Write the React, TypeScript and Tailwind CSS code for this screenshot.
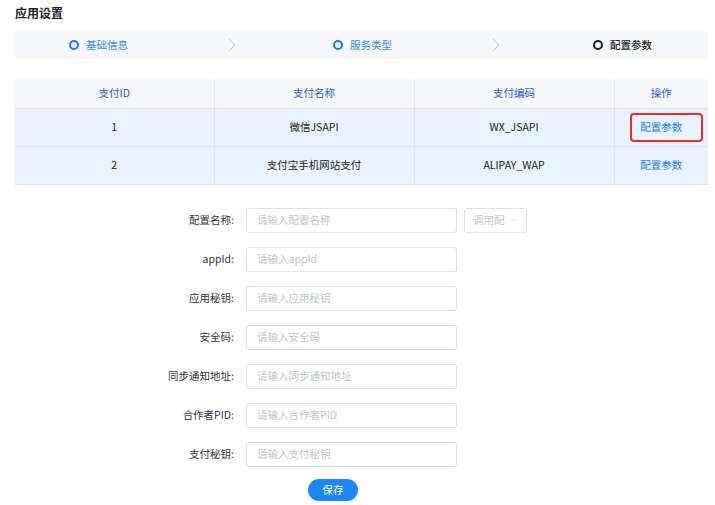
import { ChevronDown } from 'lucide-react'

const font = { fontFamily: '"Noto Sans CJK SC", "Noto Sans", sans-serif' }

const rows = [
  { id: '1', name: '微信JSAPI', code: 'WX_JSAPI', marked: true },
  { id: '2', name: '支付宝手机网站支付', code: 'ALIPAY_WAP', marked: false },
]

const fields = [
  { label: '配置名称:', placeholder: '请输入配置名称', select: true },
  { label: 'appId:', placeholder: '请输入appId' },
  { label: '应用秘钥:', placeholder: '请输入应用秘钥' },
  { label: '安全码:', placeholder: '请输入安全码' },
  { label: '同步通知地址:', placeholder: '请输入同步通知地址' },
  { label: '合作者PID:', placeholder: '请输入合作者PID' },
  { label: '支付秘钥:', placeholder: '请输入支付秘钥' },
]

function Step({ text, active }: { text: string; active?: boolean }) {
  return (
    <div className="flex items-center gap-[7px] w-[159px] shrink-0">
      <span
        className={
          active
            ? 'w-[10px] h-[10px] rounded-full border-2 border-[#1677ff]'
            : 'w-[10px] h-[10px] rounded-full border-2 border-[#1f1f1f]'
        }
      />
      <span className={active ? 'text-[10.5px] text-[#2f8cf0]' : 'text-[10.5px] text-[#222] font-medium'}>{text}</span>
    </div>
  )
}

function Arrow() {
  return (
    <svg width="8" height="14" viewBox="0 0 8 14" className="shrink-0">
      <path d="M1 1 L7 7 L1 13" fill="none" stroke="#c6cad1" strokeWidth="1" />
    </svg>
  )
}

export default function App() {
  return (
    <div className="w-[715px] h-[505px] bg-white overflow-hidden px-[15px] pr-[7px]" style={font}>
      {/* 标题 */}
      <h1 className="pt-[5px] text-[12px] leading-[16px] font-bold text-[#222]">应用设置</h1>

      {/* 步骤条 */}
      <div className="mt-[10px] h-[28px] rounded-[3px] bg-[#f5f7fa] flex items-center pl-[54px]">
        <Step text="基础信息" active />
        <Arrow />
        <div className="w-[97px] shrink-0" />
        <Step text="服务类型" active />
        <Arrow />
        <div className="w-[93px] shrink-0" />
        <Step text="配置参数" />
      </div>

      {/* 支付方式表格 */}
      <table className="mt-[20px] w-[693px] border-collapse text-[10.5px] table-fixed">
        <thead>
          <tr className="h-[29px] bg-[#f5f7fa] text-[#2a5bd7]">
            <th className="w-[199px] font-normal border-r border-b border-[#e3e8ef]">支付ID</th>
            <th className="w-[200px] font-normal border-r border-b border-[#e3e8ef]">支付名称</th>
            <th className="w-[200px] font-normal border-r border-b border-[#e3e8ef]">支付编码</th>
            <th className="w-[94px] font-normal border-b border-[#e3e8ef]">操作</th>
          </tr>
        </thead>
        <tbody>
          {rows.map((r) => (
            <tr key={r.id} className="h-[38px] bg-[#e8f3ff] text-[#222] text-center">
              <td className="border-r border-b border-[#dde6f0]">{r.id}</td>
              <td className="border-r border-b border-[#dde6f0]">{r.name}</td>
              <td className="border-r border-b border-[#dde6f0]">{r.code}</td>
              <td className="relative border-b border-[#dde6f0] text-[#1d7ff0]">
                配置参数
                {r.marked && (
                  <span className="absolute left-[15px] top-[4px] w-[73px] h-[29px] rounded-[4px] border-2 border-[#ef2b22]" />
                )}
              </td>
            </tr>
          ))}
        </tbody>
      </table>

      {/* 配置表单 */}
      <div className="mt-[23px] flex flex-col gap-[14px] text-[10.5px]">
        {fields.map((f) => (
          <div key={f.label} className="flex items-center h-[25px]">
            <label className="w-[219px] text-right text-[#333]">{f.label}</label>
            <div className="ml-[12px] w-[211px] h-[25px] rounded-[3px] border border-[#dcdfe6] flex items-center px-[10px] text-[#c0c4cc]">
              {f.placeholder}
            </div>
            {f.select && (
              <div className="ml-[7px] w-[63px] h-[25px] rounded-[3px] border border-[#dcdfe6] flex items-center pl-[8px] pr-[6px] text-[#c0c4cc]">
                <span className="w-[33px] overflow-hidden whitespace-nowrap">调用配置</span>
                <ChevronDown className="ml-[2px] w-[10px] h-[10px]" strokeWidth={1.5} />
              </div>
            )}
          </div>
        ))}
        <div className="pl-[293px] -mt-[2px]">
          <button className="w-[50px] h-[22px] rounded-full bg-[#1b87f5] text-white text-[10.5px]">保存</button>
        </div>
      </div>
    </div>
  )
}
